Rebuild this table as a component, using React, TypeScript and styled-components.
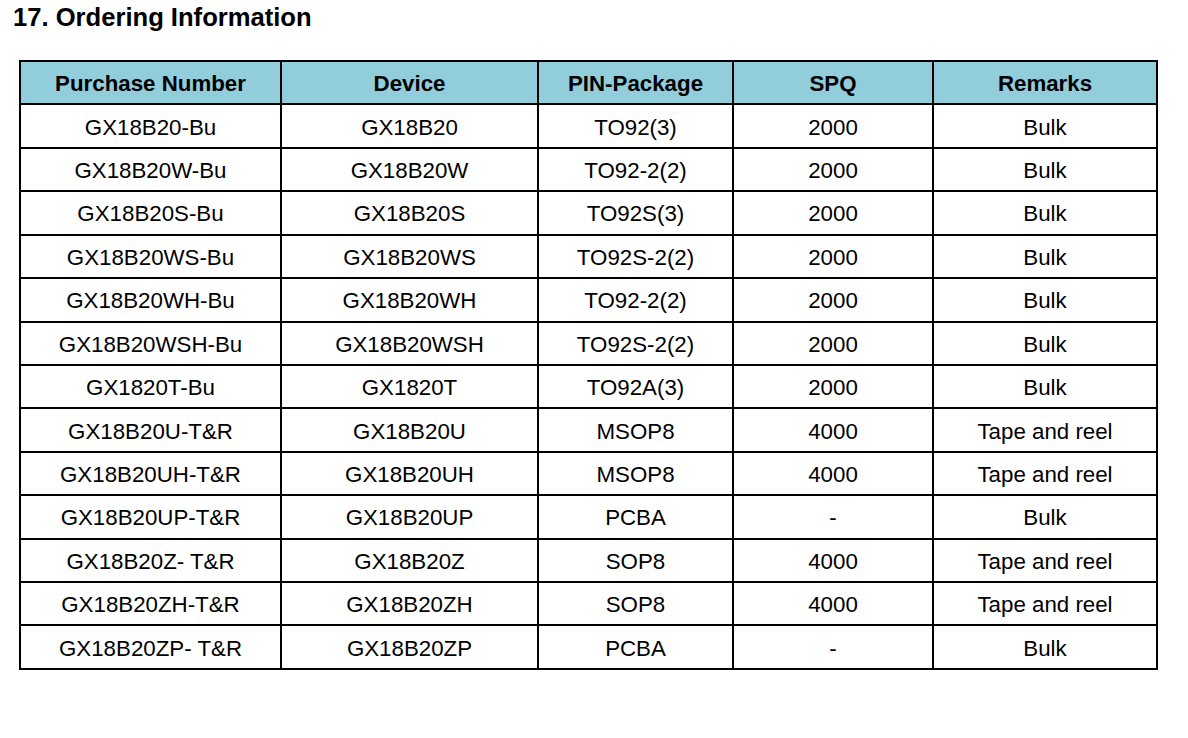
import React from "react";
import styled, { createGlobalStyle } from "styled-components";

const GlobalStyle = createGlobalStyle`
  html, body {
    margin: 0;
    padding: 0;
    background: #ffffff;
  }
  body {
    font-family: "Liberation Sans", Arial, sans-serif;
    color: #000000;
  }
`;

const Page = styled.main`
  padding: 3px 0 0 19px;
`;

const Heading = styled.h2`
  margin: 0 0 28px -6px;
  font-size: 25.6px;
  font-weight: 700;
  line-height: 29px;
  color: #000000;
`;

const Grid = styled.div`
  display: grid;
  grid-template-columns: 259px 255px 193px 198px 222px;
  grid-auto-rows: 41.43px;
  gap: 2px;
  padding: 2px;
  width: fit-content;
  background: #000000;
`;

const Cell = styled.div<{ $head?: boolean }>`
  display: flex;
  align-items: center;
  justify-content: center;
  background: ${(p) => (p.$head ? "#92cddc" : "#ffffff")};
  font-size: 22.3px;
  font-weight: ${(p) => (p.$head ? 700 : 400)};
  padding-top: 3px;
  white-space: nowrap;
`;

const HEADERS = ["Purchase Number", "Device", "PIN-Package", "SPQ", "Remarks"];

const ROWS: string[][] = [
  ["GX18B20-Bu", "GX18B20", "TO92(3)", "2000", "Bulk"],
  ["GX18B20W-Bu", "GX18B20W", "TO92-2(2)", "2000", "Bulk"],
  ["GX18B20S-Bu", "GX18B20S", "TO92S(3)", "2000", "Bulk"],
  ["GX18B20WS-Bu", "GX18B20WS", "TO92S-2(2)", "2000", "Bulk"],
  ["GX18B20WH-Bu", "GX18B20WH", "TO92-2(2)", "2000", "Bulk"],
  ["GX18B20WSH-Bu", "GX18B20WSH", "TO92S-2(2)", "2000", "Bulk"],
  ["GX1820T-Bu", "GX1820T", "TO92A(3)", "2000", "Bulk"],
  ["GX18B20U-T&R", "GX18B20U", "MSOP8", "4000", "Tape and reel"],
  ["GX18B20UH-T&R", "GX18B20UH", "MSOP8", "4000", "Tape and reel"],
  ["GX18B20UP-T&R", "GX18B20UP", "PCBA", "-", "Bulk"],
  ["GX18B20Z- T&R", "GX18B20Z", "SOP8", "4000", "Tape and reel"],
  ["GX18B20ZH-T&R", "GX18B20ZH", "SOP8", "4000", "Tape and reel"],
  ["GX18B20ZP- T&R", "GX18B20ZP", "PCBA", "-", "Bulk"],
];

export default function App() {
  return (
    <>
      <GlobalStyle />
      <Page>
        <Heading>17. Ordering Information</Heading>
        <Grid role="table">
          {HEADERS.map((h) => (
            <Cell key={h} $head role="columnheader">
              {h}
            </Cell>
          ))}
          {ROWS.map((row, i) =>
            row.map((value, j) => (
              <Cell key={`${i}-${j}`} role="cell">
                {value}
              </Cell>
            ))
          )}
        </Grid>
      </Page>
    </>
  );
}
